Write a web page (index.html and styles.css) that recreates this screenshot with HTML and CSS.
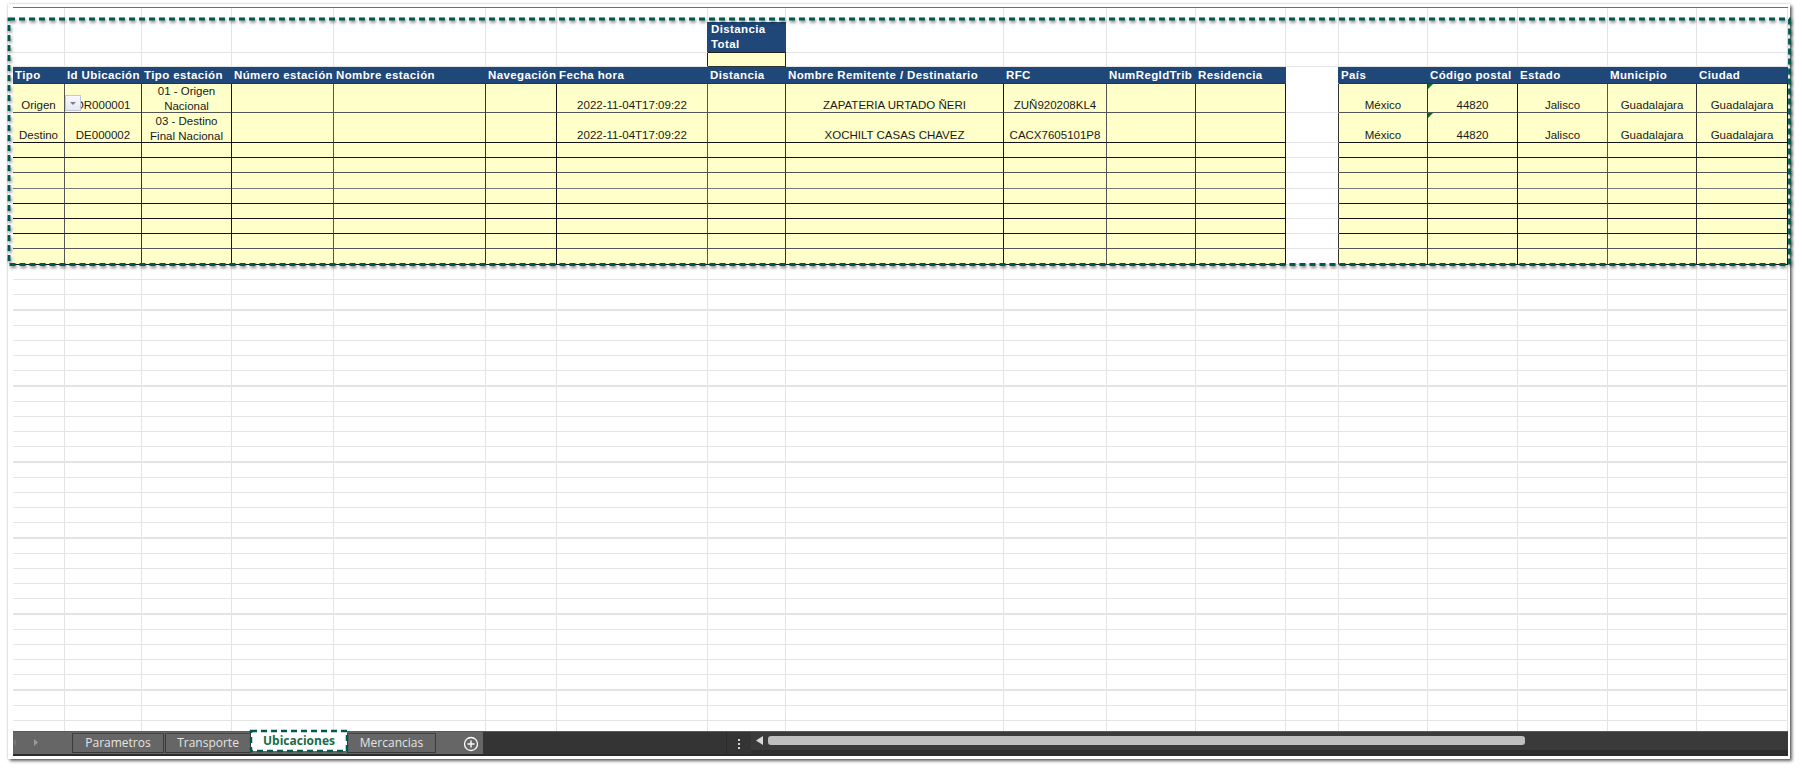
FILE: index.html
```html
<!DOCTYPE html>
<html lang="es">
<head>
<meta charset="utf-8">
<title>Ubicaciones</title>
<link rel="stylesheet" href="styles.css">
</head>
<body>
<div class="frame">
  <div class="sheet">
    <table class="grid">
      <colgroup>
        <col class="c52"><col class="c77"><col class="c90"><col class="c102"><col class="c152"><col class="c71"><col class="c151"><col class="c78"><col class="c218"><col class="c103"><col class="c89"><col class="c90"><col class="c53"><col class="c89"><col class="c90"><col class="c90"><col class="c89"><col class="c91">
      </colgroup>
      <tbody>
        <tr class="blank h14 noline"><td></td><td></td><td></td><td></td><td></td><td></td><td></td><td></td><td></td><td></td><td></td><td></td><td></td><td></td><td></td><td></td><td></td><td></td></tr>
        <tr class="blank h30"><td></td><td></td><td></td><td></td><td></td><td></td><td class="to-blue"></td><td class="head total">Distancia<br>Total</td><td></td><td></td><td></td><td></td><td></td><td></td><td></td><td></td><td></td><td></td></tr>
        <tr class="blank h14"><td></td><td></td><td></td><td></td><td></td><td></td><td class="to-dark"></td><td class="fill boxed"></td><td></td><td></td><td></td><td></td><td></td><td></td><td></td><td></td><td></td><td></td></tr>
        <tr class="header h17">
          <th>Tipo</th><th>Id Ubicación</th><th>Tipo estación</th><th>Número estación</th><th>Nombre estación</th><th>Navegación</th><th>Fecha hora</th><th>Distancia</th><th>Nombre Remitente / Destinatario</th><th>RFC</th><th>NumRegIdTrib</th><th>Residencia</th><th class="gap"></th><th>País</th><th>Código postal</th><th>Estado</th><th>Municipio</th><th>Ciudad</th>
        </tr>
        <tr class="data h29 soft">
          <td>Origen</td><td class="has-btn">DR000001<span class="drop"><span class="drop-arrow"></span></span></td><td><span class="two">01 - Origen<br>Nacional</span></td><td></td><td></td><td></td><td>2022-11-04T17:09:22</td><td></td><td>ZAPATERIA URTADO ÑERI</td><td>ZUÑ920208KL4</td><td></td><td></td><td class="gap"></td><td>México</td><td class="note">44820</td><td>Jalisco</td><td>Guadalajara</td><td>Guadalajara</td>
        </tr>
        <tr class="data h30">
          <td>Destino</td><td>DE000002</td><td><span class="two">03 - Destino<br>Final Nacional</span></td><td></td><td></td><td></td><td>2022-11-04T17:09:22</td><td></td><td>XOCHILT CASAS CHAVEZ</td><td>CACX7605101P8</td><td></td><td></td><td class="gap"></td><td>México</td><td class="note">44820</td><td>Jalisco</td><td>Guadalajara</td><td>Guadalajara</td>
        </tr>
        <tr class="data h15"><td></td><td></td><td></td><td></td><td></td><td></td><td></td><td></td><td></td><td></td><td></td><td></td><td class="gap"></td><td></td><td></td><td></td><td></td><td></td></tr>
        <tr class="data h15 soft"><td></td><td></td><td></td><td></td><td></td><td></td><td></td><td></td><td></td><td></td><td></td><td></td><td class="gap"></td><td></td><td></td><td></td><td></td><td></td></tr>
        <tr class="data h16 softer"><td></td><td></td><td></td><td></td><td></td><td></td><td></td><td></td><td></td><td></td><td></td><td></td><td class="gap"></td><td></td><td></td><td></td><td></td><td></td></tr>
        <tr class="data h15"><td></td><td></td><td></td><td></td><td></td><td></td><td></td><td></td><td></td><td></td><td></td><td></td><td class="gap"></td><td></td><td></td><td></td><td></td><td></td></tr>
        <tr class="data h15"><td></td><td></td><td></td><td></td><td></td><td></td><td></td><td></td><td></td><td></td><td></td><td></td><td class="gap"></td><td></td><td></td><td></td><td></td><td></td></tr>
        <tr class="data h15"><td></td><td></td><td></td><td></td><td></td><td></td><td></td><td></td><td></td><td></td><td></td><td></td><td class="gap"></td><td></td><td></td><td></td><td></td><td></td></tr>
        <tr class="data h15 soft"><td></td><td></td><td></td><td></td><td></td><td></td><td></td><td></td><td></td><td></td><td></td><td></td><td class="gap"></td><td></td><td></td><td></td><td></td><td></td></tr>
        <tr class="data h16"><td></td><td></td><td></td><td></td><td></td><td></td><td></td><td></td><td></td><td></td><td></td><td></td><td class="gap"></td><td></td><td></td><td></td><td></td><td></td></tr>
        <tr class="rest"><td></td><td></td><td></td><td></td><td></td><td></td><td></td><td></td><td></td><td></td><td></td><td></td><td></td><td></td><td></td><td></td><td></td><td></td></tr>
      </tbody>
    </table>
    <div class="tabbar">
      <div class="tabs-side">
        <div class="nav">
          <svg class="nav-icon" width="59" height="20" viewBox="0 0 59 20"><path d="M3 7l-3 3.5 3 3.500z" fill="#777"/><path d="M21 7l4 3.500-4 3.500z" fill="#9a9a9a"/></svg>
        </div>
        <div class="tab">Parametros</div>
        <div class="tab tab-second">Transporte</div>
        <div class="tab tab-active">Ubicaciones
          <svg class="ring" width="100" height="24" viewBox="0 0 100 24"><rect x="2" y="2" width="96" height="20" fill="none" stroke="#00594f" stroke-width="2.500" stroke-dasharray="6 4"/></svg>
        </div>
        <div class="tab tab-last">Mercancias</div>
        <div class="add">
          <svg width="16" height="16" viewBox="0 0 16 16"><circle cx="8" cy="8" r="6.500" fill="none" stroke="#fff" stroke-width="1.300"/><path d="M8 4.500v7M4.500 8h7" stroke="#fff" stroke-width="1.400"/></svg>
        </div>
      </div>
      <div class="spacer"></div>
      <div class="scroll-zone">
        <div class="dots"><span></span><span></span><span></span></div>
        <div class="scrollbar">
          <div class="track">
            <svg class="arrow" width="8" height="10" viewBox="0 0 8 10"><path d="M7 0v9L0 4.500z" fill="#d8d8d8"/></svg>
            <div class="thumb"></div>
          </div>
          <div class="strip"></div>
        </div>
      </div>
    </div>
  </div>
  <svg class="ants" width="1790" height="254" viewBox="0 0 1790 254"><rect x="4" y="4" width="1780.500" height="245.500" fill="none" stroke="#00594f" stroke-width="2.800" stroke-dasharray="6 4"/></svg>
</div>
</body>
</html>
```

FILE: styles.css
```css
* { box-sizing: border-box; }

html, body {
  margin: 0;
  padding: 0;
  background: #fff;
}

body {
  width: 1802px;
  height: 768px;
  overflow: hidden;
  font-family: "Liberation Sans", Arial, sans-serif;
}

.frame {
  position: relative;
  width: 1782px;
  height: 755px;
  margin: 4px 0 0 8px;
  padding: 3px 2px 4px 5px;
  background: #fff;
  box-shadow: 0 0 2px rgba(0, 0, 0, .25), 2px 2px 3px rgba(0, 0, 0, .6);
}

.sheet {
  display: flex;
  flex-direction: column;
  height: 748px;
  border-top: 1px solid #6f6f6f;
}

/* Spreadsheet */
.grid {
  width: 1775px;
  table-layout: fixed;
  border-collapse: separate;
  border-spacing: 0;
  font-size: 11.5px;
  color: #1a1a1a;
}

.c52 { width: 52px; }
.c53 { width: 53px; }
.c71 { width: 71px; }
.c77 { width: 77px; }
.c78 { width: 78px; }
.c89 { width: 89px; }
.c90 { width: 90px; }
.c91 { width: 91px; }
.c102 { width: 102px; }
.c103 { width: 103px; }
.c151 { width: 151px; }
.c152 { width: 152px; }
.c218 { width: 218px; }

.h14 td { height: 14px; }
.h15 td { height: 15px; }
.h16 td { height: 16px; }
.h17 th { height: 17px; }
.h29 td { height: 29px; }
.h30 td { height: 30px; }

.grid td, .grid th {
  padding: 0;
  border-right: 1px solid #e4e4e4;
  border-bottom: 1px solid #e4e4e4;
}

.noline td { border-bottom-color: transparent; }

.blank .to-blue { border-right-color: #1f4778; }
.blank .to-dark { border-right-color: #222; }

.head {
  background: #1f4778;
}

.grid .total {
  padding-left: 3px;
  color: #fff;
  font-weight: 700;
  line-height: 15px;
  letter-spacing: .38px;
  text-align: left;
  vertical-align: middle;
  border-right-color: #1f4778;
  border-bottom-color: #222;
}

.fill {
  background: #ffffc9;
}

.grid .boxed {
  border-right-color: #222;
  border-bottom-color: #333;
}

.header th {
  padding: 1px 0 0 2px;
  background: #1f4778;
  color: #fff;
  font-size: 11.5px;
  font-weight: 700;
  line-height: 15px;
  letter-spacing: .38px;
  text-align: left;
  white-space: nowrap;
  border-right-color: #1f4778;
  border-bottom-color: #333;
}

.header th.gap {
  background: #fff;
  border-right-color: #1f4778;
  border-bottom-color: #fff;
}

.data td {
  background: #ffffc9;
  line-height: 13px;
  text-align: center;
  vertical-align: bottom;
  white-space: nowrap;
  border-right-color: #333;
  border-bottom-color: #151515;
}

.data.soft td { border-bottom-color: #555; }
.data.softer td { border-bottom-color: #777; }

.data td:nth-child(3n+1) { border-right-color: #555; }
.data td:nth-child(3n) { border-right-color: #151515; }

.data td.gap {
  background: #fff;
  border-right-color: #333;
  border-bottom-color: #e4e4e4;
}

.two {
  display: block;
  height: 28px;
  line-height: 15px;
}

.has-btn {
  position: relative;
}

.drop {
  position: absolute;
  left: 0;
  bottom: 1px;
  display: flex;
  justify-content: center;
  width: 16px;
  height: 16px;
  padding-top: 6px;
  background: linear-gradient(#f8f9fc, #e6e9f3);
  border: 1px solid #c3c7d3;
}

.drop-arrow {
  width: 0;
  height: 0;
  border-left: 3px solid transparent;
  border-right: 3px solid transparent;
  border-top: 3px solid #7d7d85;
}

.note {
  position: relative;
}

.note::before {
  content: "";
  position: absolute;
  left: 0;
  top: 0;
  border-top: 5px solid #0a6b2d;
  border-right: 5px solid transparent;
}

.rest td {
  height: 466px;
  border-bottom: 0;
  background: repeating-linear-gradient(to bottom, transparent 0, transparent 14px, #e4e4e4 14px, #e4e4e4 15.2px);
}

/* Tab bar */
.tabbar {
  display: flex;
  height: 25px;
  flex: none;
  background: #343434;
  border-top: 1px solid #5a5a5a;
  border-bottom: 2px solid #2c2c2c;
}

.tabs-side {
  display: flex;
  width: 470px;
  flex: none;
  background: #666;
}

.nav {
  width: 59px;
  flex: none;
}

.nav-icon {
  display: block;
}

.tab {
  display: flex;
  align-items: center;
  justify-content: center;
  width: 92px;
  height: 20px;
  margin-top: 1px;
  flex: none;
  color: #e4e4e4;
  font-family: "Open Sans", sans-serif;
  font-size: 12px;
  line-height: 1;
  background: #666;
  border: 1px solid #3a3a3a;
  border-top-color: #444;
}

.tab-second {
  width: 86px;
  margin-left: 1px;
}

.tab-active {
  position: relative;
  width: 96px;
  height: 20px;
  margin-top: -1px;
  color: #1a6b45;
  font-weight: 700;
  background: #fff;
  border: 0;
}

.ring {
  position: absolute;
  left: -2px;
  top: -2px;
}

.tab-last {
  width: 89px;
}

.add {
  display: flex;
  align-items: center;
  justify-content: flex-end;
  height: 20px;
  width: 43px;
  flex: none;
  margin-top: 2px;
}

.spacer {
  flex: 1;
}

.scroll-zone {
  display: flex;
  width: 1062px;
  flex: none;
  border-left: 1px solid #2a2a2a;
}

.dots {
  display: flex;
  flex-direction: column;
  gap: 2px;
  width: 24px;
  flex: none;
  padding: 7px 0 0 11px;
}

.dots span {
  width: 2px;
  height: 2px;
  background: #d0d0d0;
}

.scrollbar {
  display: flex;
  flex: 1;
  flex-direction: column;
  background: #3a3a3a;
}

.track {
  display: flex;
  align-items: center;
  height: 18px;
  padding-left: 5px;
  padding-bottom: 1px;
}

.arrow {
  flex: none;
}

.thumb {
  width: 757px;
  height: 9px;
  margin-left: 4px;
  background: #bfbfbf;
  border-radius: 3px;
}

.strip {
  flex: 1;
  background: #2e2e2e;
}

/* Selection marquee over the range */
.ants {
  position: absolute;
  left: -3px;
  top: 11px;
  filter: drop-shadow(1px 2px 1.5px rgba(0, 0, 0, .5));
}
```
